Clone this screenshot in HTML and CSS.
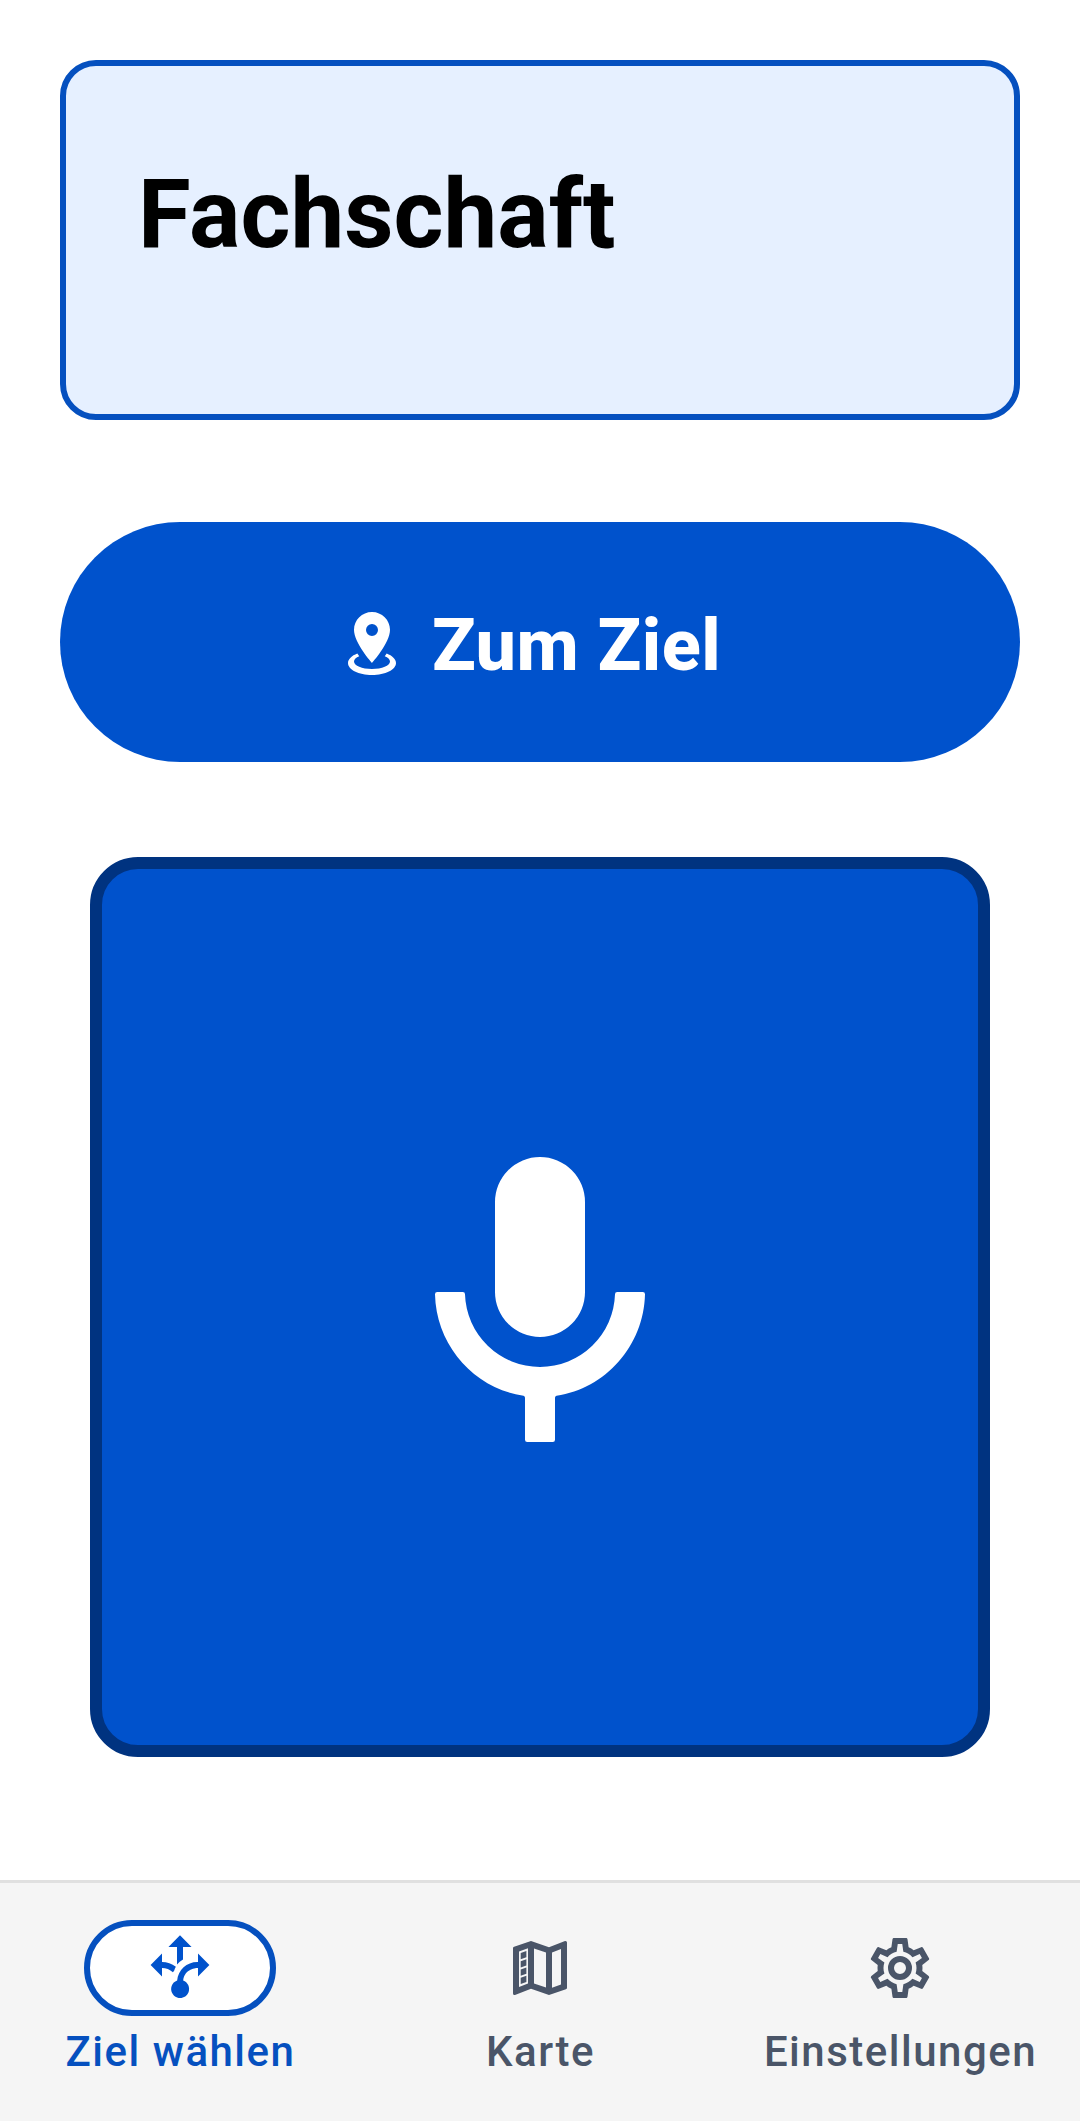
FILE: index.html
```html
<!DOCTYPE html>
<html lang="de">
<head>
<meta charset="utf-8">
<title>Ziel wählen</title>
<link rel="stylesheet" href="styles.css">
</head>
<body>
<div class="app">
  <main class="content">
    <section class="destination"><h1 class="destination-name">Fachschaft</h1></section>
    <button class="go-button" type="button">
      <svg class="icon" viewBox="0 0 24 24"><path d="M12,2C15.31,2 18,4.66 18,7.95C18,12.41 12,19 12,19C12,19 6,12.41 6,7.95C6,4.66 8.69,2 12,2M12,6A2,2 0 0,0 10,8A2,2 0 0,0 12,10A2,2 0 0,0 14,8A2,2 0 0,0 12,6M20,19C20,21.21 16.42,23 12,23C7.58,23 4,21.21 4,19C4,17.71 5.22,16.56 7.11,15.83L7.75,16.74C6.67,17.19 6,17.81 6,18.5C6,19.88 8.69,21 12,21C15.31,21 18,19.88 18,18.5C18,17.81 17.33,17.19 16.25,16.74L16.89,15.83C18.78,16.56 20,17.71 20,19Z"/></svg>
      <span class="go-label">Zum Ziel</span>
    </button>
    <button class="mic-button" type="button" aria-label="Spracheingabe">
      <svg class="mic-icon" viewBox="0 0 24 24"><path d="M12,2A3,3 0 0,1 15,5V11A3,3 0 0,1 12,14A3,3 0 0,1 9,11V5A3,3 0 0,1 12,2M18.85,11Q19,11 19,11.15C18.92,14.6 16.35,17.45 13.1,17.91Q13,17.94 13,18.05V20.85Q13,21 12.85,21H11.15Q11,21 11,20.85V18.05Q11,17.94 10.9,17.91C7.65,17.45 5.08,14.6 5,11.15Q5,11 5.15,11H6.85Q7,11 7,11.15A5,5 0 0,0 12,16A5,5 0 0,0 17,11.15Q17,11 17.15,11Z"/></svg>
    </button>
  </main>
  <nav class="tabs">
    <a class="tab tab-active">
      <span class="tab-pill"><svg class="icon" viewBox="0 0 24 24"><path d="M10.05,12.9L9.64,13.4C8.63,12.5 7.34,12.03 6,12V14.85L2.2,11L6,7.15V10C7.67,10 9.3,10.57 10.63,11.59C10.4,11.95 10.2,12.4 10.05,12.9M18,14.85V12C17.5,12 13.5,12.16 13.05,16.2C14.61,16.75 15.43,18.47 14.88,20.03C14.33,21.59 12.61,22.41 11.05,21.86C9.5,21.3 8.67,19.59 9.22,18.03C9.5,17.17 10.2,16.5 11.05,16.2C11.34,12.61 14.4,9.88 18,10V7.15L21.8,11L18,14.85M13,9.2C12.23,9.63 11.56,10.17 11,10.8V5H8.15L12,1.1L15.85,5H13Z"/></svg></span>
      <span class="tab-label">Ziel wählen</span>
    </a>
    <a class="tab">
      <span class="tab-pill"><svg class="icon" viewBox="0 0 24 24"><path d="M9,3L3.36,4.9C3.15,4.97 3,5.15 3,5.38V20.5A0.5,0.5 0 0,0 3.5,21L3.66,20.97L9,18.9L15,21L20.64,19.1C20.85,19.03 21,18.85 21,18.62V3.5A0.5,0.5 0 0,0 20.5,3L20.34,3.03L15,5.1L9,3M8,5.45V17.15L5,18.31V6.46L8,5.45M10,5.47L14,6.87V18.53L10,17.13V5.47M19,5.7V17.54L16,18.55V6.86L19,5.7M7.46,6.3L5.57,6.97V9.12L7.46,8.45V6.3M7.46,9.05L5.57,9.72V11.87L7.46,11.2V9.05M7.46,11.8L5.57,12.47V14.62L7.46,13.95V11.8M7.46,14.55L5.57,15.22V17.37L7.46,16.7V14.55Z"/></svg></span>
      <span class="tab-label">Karte</span>
    </a>
    <a class="tab">
      <span class="tab-pill"><svg class="icon" viewBox="0 0 24 24"><path d="M12,8A4,4 0 0,1 16,12A4,4 0 0,1 12,16A4,4 0 0,1 8,12A4,4 0 0,1 12,8M12,10A2,2 0 0,0 10,12A2,2 0 0,0 12,14A2,2 0 0,0 14,12A2,2 0 0,0 12,10M10,22C9.75,22 9.54,21.82 9.5,21.58L9.13,18.93C8.5,18.68 7.96,18.34 7.44,17.94L4.95,18.95C4.73,19.03 4.46,18.95 4.34,18.73L2.34,15.27C2.21,15.05 2.27,14.78 2.46,14.63L4.57,12.97L4.5,12L4.57,11L2.46,9.37C2.27,9.22 2.21,8.95 2.34,8.73L4.34,5.27C4.46,5.05 4.73,4.96 4.95,5.05L7.44,6.05C7.96,5.66 8.5,5.32 9.13,5.07L9.5,2.42C9.54,2.18 9.75,2 10,2H14C14.25,2 14.46,2.18 14.5,2.42L14.87,5.07C15.5,5.32 16.04,5.66 16.56,6.05L19.05,5.05C19.27,4.96 19.54,5.05 19.66,5.27L21.66,8.73C21.79,8.95 21.73,9.22 21.54,9.37L19.43,11L19.5,12L19.43,13L21.54,14.63C21.73,14.78 21.79,15.05 21.66,15.27L19.66,18.73C19.54,18.95 19.27,19.04 19.05,18.95L16.56,17.95C16.04,18.34 15.5,18.68 14.87,18.93L14.5,21.58C14.46,21.82 14.25,22 14,22H10M11.25,4L10.88,6.61C9.68,6.86 8.62,7.5 7.85,8.39L5.44,7.35L4.69,8.65L6.8,10.2C6.4,11.37 6.4,12.64 6.8,13.8L4.68,15.36L5.43,16.66L7.86,15.62C8.63,16.5 9.68,17.14 10.87,17.38L11.24,20H12.76L13.13,17.39C14.32,17.14 15.37,16.5 16.14,15.62L18.57,16.66L19.32,15.36L17.2,13.81C17.6,12.64 17.6,11.37 17.2,10.2L19.31,8.65L18.56,7.35L16.15,8.39C15.38,7.5 14.32,6.86 13.12,6.62L12.75,4H11.25Z"/></svg></span>
      <span class="tab-label">Einstellungen</span>
    </a>
  </nav>
</div>
</body>
</html>
```
FILE: styles.css
```css
* { box-sizing: border-box; }
body { margin: 0; background: #fff; font-family: Roboto, "Liberation Sans", sans-serif; }
button { border: 0; padding: 0; font: inherit; }
.app { display: flex; flex-direction: column; height: 2121px; }
.content { flex: 1; display: flex; flex-direction: column; padding: 60px 60px 0; }
.destination {
  height: 360px;
  padding: 91px 72px;
  border: 6px solid #0550bf;
  border-radius: 36px;
  background: #e6f0ff;
}
.destination-name { margin: 0; font-size: 96px; line-height: 114px; font-weight: 700; color: #000; }
.icon { display: block; width: 72px; height: 72px; fill: currentColor; }
.go-button {
  display: flex;
  align-items: center;
  gap: 24px;
  height: 240px;
  margin-top: 102px;
  padding-left: 276px;
  border-radius: 120px;
  background: #0052cc;
  color: #fff;
}
.go-label { padding-top: 7px; font-size: 72px; line-height: 84px; font-weight: 800; letter-spacing: 0.45px; }
.mic-button {
  display: flex;
  align-items: center;
  justify-content: center;
  height: 900px;
  margin: 95px 30px 0;
  border: 12px solid #003380;
  border-radius: 48px;
  background: #0052cc;
}
.mic-icon { width: 360px; height: 360px; fill: #fff; }
.tabs {
  display: grid;
  grid-template-columns: repeat(3, 1fr);
  height: 241px;
  padding-top: 37px;
  border-top: 3px solid #e0e0e0;
  background: #f5f5f5;
}
.tab { display: flex; flex-direction: column; align-items: center; gap: 12px; color: #4a5568; }
.tab-pill { display: flex; align-items: center; justify-content: center; width: 192px; height: 96px; border: 6px solid transparent; border-radius: 48px; }
.tab-active { color: #0550bf; }
.tab-active .tab-pill { border-color: #0550bf; background: #fff; color: #0052cc; }
.tab-label { padding-left: 1px; font-size: 42px; line-height: 48px; font-weight: 500; letter-spacing: 1.5px; white-space: nowrap; }
```
